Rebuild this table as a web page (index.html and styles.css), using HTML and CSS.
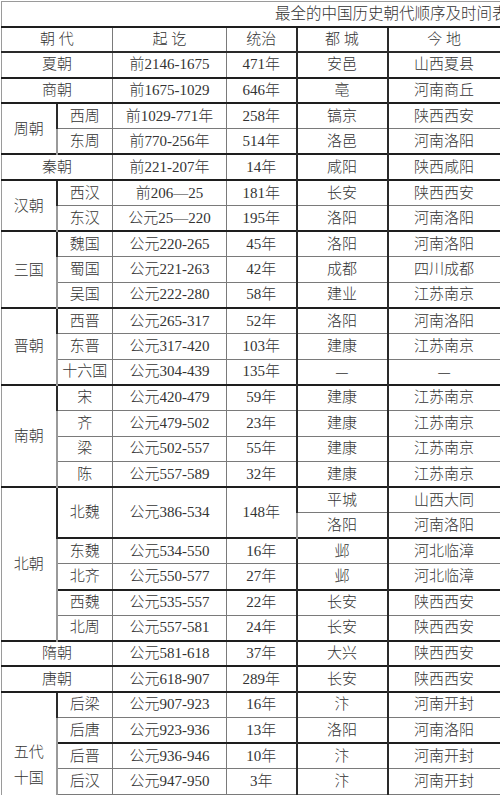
FILE: index.html
```html
<!DOCTYPE html>
<html lang="zh">
<head>
<meta charset="utf-8">
<title>最全的中国历史朝代顺序及时间表</title>
<link rel="stylesheet" href="styles.css">
</head>
<body>
<div class="page">
<table class="dyn">
  <colgroup>
    <col class="w-a"><col class="w-b"><col class="w-c"><col class="w-d"><col class="w-e"><col class="w-f">
  </colgroup>
  <tr class="title-row"><td colspan="6" class="title">最全的中国历史朝代顺序及时间表</td></tr>
  <tr class="head"><td colspan="2">朝 代</td><td>起 讫</td><td>统治</td><td class="cap">都 城</td><td>今 地</td></tr>
  <tr class="g"><td colspan="2">夏朝</td><td>前2146-1675</td><td>471年</td><td class="cap">安邑</td><td>山西夏县</td></tr>
  <tr class="g"><td colspan="2">商朝</td><td>前1675-1029</td><td>646年</td><td class="cap">亳</td><td>河南商丘</td></tr>
  <tr class="g"><td rowspan="2" class="grp">周朝</td><td class="k">西周</td><td>前1029-771年</td><td>258年</td><td class="cap">镐京</td><td>陕西西安</td></tr>
  <tr><td class="k">东周</td><td>前770-256年</td><td>514年</td><td class="cap">洛邑</td><td>河南洛阳</td></tr>
  <tr class="g"><td colspan="2">秦朝</td><td>前221-207年</td><td>14年</td><td class="cap">咸阳</td><td>陕西咸阳</td></tr>
  <tr class="g"><td rowspan="2" class="grp">汉朝</td><td class="k">西汉</td><td>前206—25</td><td>181年</td><td class="cap">长安</td><td>陕西西安</td></tr>
  <tr><td class="k">东汉</td><td>公元25—220</td><td>195年</td><td class="cap">洛阳</td><td>河南洛阳</td></tr>
  <tr class="g"><td rowspan="3" class="grp">三国</td><td class="k">魏国</td><td>公元220-265</td><td>45年</td><td class="cap">洛阳</td><td>河南洛阳</td></tr>
  <tr><td class="k">蜀国</td><td>公元221-263</td><td>42年</td><td class="cap">成都</td><td>四川成都</td></tr>
  <tr><td class="k">吴国</td><td>公元222-280</td><td>58年</td><td class="cap">建业</td><td>江苏南京</td></tr>
  <tr class="g"><td rowspan="3" class="grp">晋朝</td><td class="k">西晋</td><td>公元265-317</td><td>52年</td><td class="cap">洛阳</td><td>河南洛阳</td></tr>
  <tr><td class="k">东晋</td><td>公元317-420</td><td>103年</td><td class="cap">建康</td><td>江苏南京</td></tr>
  <tr><td class="k">十六国</td><td>公元304-439</td><td>135年</td><td class="cap dash">—</td><td class="dash">—</td></tr>
  <tr class="g"><td rowspan="4" class="grp">南朝</td><td class="k">宋</td><td>公元420-479</td><td>59年</td><td class="cap">建康</td><td>江苏南京</td></tr>
  <tr><td class="k">齐</td><td>公元479-502</td><td>23年</td><td class="cap">建康</td><td>江苏南京</td></tr>
  <tr><td class="k">梁</td><td>公元502-557</td><td>55年</td><td class="cap">建康</td><td>江苏南京</td></tr>
  <tr><td class="k">陈</td><td>公元557-589</td><td>32年</td><td class="cap">建康</td><td>江苏南京</td></tr>
  <tr class="g"><td rowspan="6" class="grp">北朝</td><td rowspan="2" class="k">北魏</td><td rowspan="2">公元386-534</td><td rowspan="2">148年</td><td class="cap">平城</td><td>山西大同</td></tr>
  <tr><td class="cap">洛阳</td><td>河南洛阳</td></tr>
  <tr class="g"><td class="k">东魏</td><td>公元534-550</td><td>16年</td><td class="cap">邺</td><td>河北临漳</td></tr>
  <tr><td class="k">北齐</td><td>公元550-577</td><td>27年</td><td class="cap">邺</td><td>河北临漳</td></tr>
  <tr class="g"><td class="k">西魏</td><td>公元535-557</td><td>22年</td><td class="cap">长安</td><td>陕西西安</td></tr>
  <tr><td class="k">北周</td><td>公元557-581</td><td>24年</td><td class="cap">长安</td><td>陕西西安</td></tr>
  <tr class="g"><td colspan="2">隋朝</td><td>公元581-618</td><td>37年</td><td class="cap">大兴</td><td>陕西西安</td></tr>
  <tr class="g"><td colspan="2">唐朝</td><td>公元618-907</td><td>289年</td><td class="cap">长安</td><td>陕西西安</td></tr>
  <tr class="g"><td rowspan="6" class="grp five">五代<br>十国</td><td class="k">后梁</td><td>公元907-923</td><td>16年</td><td class="cap">汴</td><td>河南开封</td></tr>
  <tr><td class="k">后唐</td><td>公元923-936</td><td>13年</td><td class="cap">洛阳</td><td>河南洛阳</td></tr>
  <tr class="g"><td class="k">后晋</td><td>公元936-946</td><td>10年</td><td class="cap">汴</td><td>河南开封</td></tr>
  <tr><td class="k">后汉</td><td>公元947-950</td><td>3年</td><td class="cap">汴</td><td>河南开封</td></tr>
  <tr><td class="k">后周</td><td>公元951-960</td><td>9年</td><td class="cap">汴</td><td>河南开封</td></tr>
  <tr><td class="k">十国</td><td>公元902-979</td><td>77年</td><td class="cap dash">—</td><td class="dash">—</td></tr>
</table>
</div>
</body>
</html>
```

FILE: styles.css
```css
html, body {
  margin: 0;
  padding: 0;
  background: #ffffff;
  overflow: hidden;
}

body {
  width: 500px;
  height: 795px;
  font-family: "Liberation Serif", "Noto Sans CJK SC", serif;
  color: #333333;
}

.page {
  padding: 1px 0 0 1px;
}

.dyn {
  border-collapse: collapse;
  table-layout: fixed;
  width: 498px;
}

.w-a { width: 55px; }
.w-b { width: 56px; }
.w-c { width: 114px; }
.w-d { width: 70px; }
.w-e { width: 91px; }
.w-f { width: 112px; }

.dyn td {
  border: 1px solid #7a7a7a;
  padding: 0;
  text-align: center;
  vertical-align: middle;
  font-size: 15px;
  line-height: 15px;
  font-weight: 300;
  white-space: nowrap;
  overflow: hidden;
}

.dyn tr {
  height: 25.6px;
}

.dyn tr.title-row {
  height: 25px;
}

.dyn td.title {
  text-align: left;
  padding-left: 273px;
  border-top: 1px solid #9a9a9a;
  border-left: 1px solid #9a9a9a;
  border-right: 0;
  border-bottom: 2px solid #1e1e1e;
  font-size: 15.5px;
}

.dyn tr.head td {
  border-bottom: 2px solid #2a2a2a;
}

.dyn tr.g td {
  border-top: 2px solid #1e1e1e;
}

.dyn td.k {
  border-left: 2px solid #2a2a2a;
}

.dyn td.cap {
  border-left: 2px solid #2a2a2a;
  border-right: 2px solid #2a2a2a;
}

.dyn td.grp {
  border-left: 1px solid #9a9a9a;
  line-height: 26px;
}

.dyn td.five {
  padding-bottom: 8px;
}

.dyn td.dash {
  font-family: "Noto Sans CJK SC", sans-serif;
}

.dyn tr td:first-child {
  border-left-color: #9a9a9a;
}

.dyn td:last-child {
  border-right: 0;
}
```
